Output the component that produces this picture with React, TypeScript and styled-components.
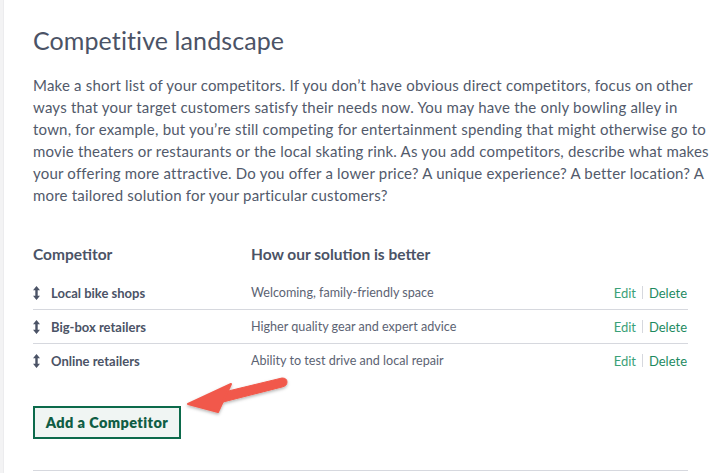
import React from "react";
import styled, { createGlobalStyle } from "styled-components";

const Global = createGlobalStyle`
  html, body { margin: 0; padding: 0; background: #ffffff; }
  body { font-family: "Lato", "Open Sans", sans-serif; -webkit-font-smoothing: antialiased; }
`;

const Page = styled.div`
  display: flex;
  min-height: 473px;
  width: 715px;
  overflow: hidden;
`;

const SideStrip = styled.div`
  width: 3px;
  flex: none;
  background: #f3f3f4;
  border-right: 1px solid #ececee;
`;

const Panel = styled.main`
  position: relative;
  flex: 1;
  padding: 24px 0 0 29px;
  width: 655px;
`;

const Title = styled.h1`
  margin: 0;
  font-size: 25px;
  font-weight: 400;
  color: #4b5366;
  letter-spacing: 0.1px;
  line-height: 32px;
`;

const Intro = styled.p`
  margin: 18px 0 0;
  width: 680px;
  font-size: 15px;
  letter-spacing: 0.2px;
  line-height: 22px;
  color: #525a6b;
`;

const Line = styled.span`
  display: block;
  white-space: nowrap;
`;

const Table = styled.div`
  margin-top: 36px;
  width: 655px;
`;

const HeadRow = styled.div`
  display: grid;
  grid-template-columns: 218px 1fr;
  height: 24px;
  align-items: center;
  margin-bottom: 10px;
`;

const HeadCell = styled.div`
  font-size: 15.5px;
  font-weight: 700;
  color: #4b5366;
`;

const Row = styled.div<{ $last?: boolean }>`
  display: grid;
  grid-template-columns: 18px 200px 1fr auto;
  align-items: center;
  height: 33px;
  border-bottom: ${(p) => (p.$last ? "none" : "1.5px solid #d6d8de")};
`;

const Name = styled.div`
  font-size: 13px;
  font-weight: 700;
  color: #4b5366;
`;

const Desc = styled.div`
  font-size: 12.6px;
  color: #5c6373;
`;

const Actions = styled.div`
  display: flex;
  align-items: center;
  gap: 6px;
  font-size: 13px;
  padding-right: 1px;
`;

const ActionLink = styled.a<{ $dark?: boolean }>`
  color: ${(p) => (p.$dark ? "#1d8a5f" : "#3aa178")};
  text-decoration: none;
  cursor: pointer;
`;

const Sep = styled.span`
  width: 1px;
  height: 13px;
  background: #d6d8de;
`;

const AddButton = styled.button`
  display: block;
  margin-top: 29px;
  width: 148px;
  height: 33px;
  border: 2.5px solid #0c6a4b;
  background: #f0f5f3;
  color: #0f5d44;
  font-family: "Lato", sans-serif;
  font-size: 14.5px;
  font-weight: 800;
  letter-spacing: 0.4px;
  padding: 0;
  cursor: pointer;
`;

const Divider = styled.hr`
  margin: 31px 0 0;
  width: 655px;
  border: none;
  border-top: 1.5px solid #d6d8de;
`;

const Annotation = styled.svg`
  position: absolute;
  left: 150px;
  top: 360px;
  overflow: visible;
`;

const SortIcon = () => (
  <svg width="7" height="14" viewBox="0 0 7 14">
    <path d="M3.5 0 L7 4.2 L4.7 4.2 L4.7 9.8 L7 9.8 L3.5 14 L0 9.8 L2.3 9.8 L2.3 4.2 L0 4.2 Z" fill="#4b5366" />
  </svg>
);

const rows = [
  { name: "Local bike shops", desc: "Welcoming, family-friendly space" },
  { name: "Big-box retailers", desc: "Higher quality gear and expert advice" },
  { name: "Online retailers", desc: "Ability to test drive and local repair" },
];

const introLines = [
  "Make a short list of your competitors. If you don’t have obvious direct competitors, focus on other",
  "ways that your target customers satisfy their needs now. You may have the only bowling alley in",
  "town, for example, but you’re still competing for entertainment spending that might otherwise go to",
  "movie theaters or restaurants or the local skating rink. As you add competitors, describe what makes",
  "your offering more attractive. Do you offer a lower price? A unique experience? A better location? A",
  "more tailored solution for your particular customers?",
];

export default function App() {
  return (
    <Page>
      <Global />
      <SideStrip />
      <Panel>
        <Title>Competitive landscape</Title>
        <Intro>
          {introLines.map((l) => (
            <Line key={l}>{l}</Line>
          ))}
        </Intro>
        <Table>
          <HeadRow>
            <HeadCell>Competitor</HeadCell>
            <HeadCell>How our solution is better</HeadCell>
          </HeadRow>
          {rows.map((r, i) => (
            <Row key={r.name} $last={i === rows.length - 1}>
              <SortIcon />
              <Name>{r.name}</Name>
              <Desc>{r.desc}</Desc>
              <Actions>
                <ActionLink>Edit</ActionLink>
                <Sep />
                <ActionLink $dark>Delete</ActionLink>
              </Actions>
            </Row>
          ))}
        </Table>
        <AddButton>Add a Competitor</AddButton>
        <Divider />
        <Annotation width="140" height="70" viewBox="150 360 140 70">
          <defs>
            <filter id="sh" x="-20%" y="-40%" width="140%" height="180%">
              <feDropShadow dx="0" dy="1.5" stdDeviation="1.5" floodColor="#000" floodOpacity="0.3" />
            </filter>
          </defs>
          <g filter="url(#sh)" fill="#f1594b" stroke="#f1594b" strokeLinejoin="round">
            <path d="M216 393 L278 378 Q283 378 283 382 Q283 386 278 387 L219 402 Z" strokeWidth="1" />
            <polygon points="184,404 227,384 214,412" strokeWidth="2" />
          </g>
        </Annotation>
      </Panel>
    </Page>
  );
}
